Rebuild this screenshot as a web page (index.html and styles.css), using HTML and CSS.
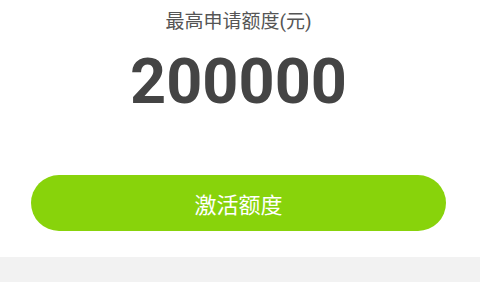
FILE: index.html
```html
<!DOCTYPE html>
<html lang="zh-CN">
<head>
    <meta charset="UTF-8">
    <meta name="viewport" content="width=device-width, initial-scale=1.0">
    <title>最高申请额度</title>
    <link rel="stylesheet" href="styles.css">
</head>
<body>
    <div class="quota">
        <div class="quota-label">最高申请额度(元)</div>
        <div class="quota-amount">200000</div>
        <button class="activate-btn">激活额度</button>
    </div>
    <div class="divider"></div>
</body>
</html>
```

FILE: styles.css
```css
body, html {
    margin: 0;
    background-color: #fff;
    font-family: Roboto, "Noto Sans CJK SC", sans-serif;
}
.quota {
    display: flex;
    flex-direction: column;
    align-items: center;
    padding: 8px 3px 0 0;
}
.quota-label {
    font-size: 19px;
    line-height: 28px;
    color: #555;
}
.quota-amount {
    font-size: 63px;
    font-weight: bold;
    line-height: 72px;
    color: #444;
    margin-top: 10px;
}
.activate-btn {
    width: 415px;
    height: 56px;
    margin-top: 57px;
    border: none;
    border-radius: 28px;
    background-color: #88d30b;
    color: #fff;
    font-family: "Noto Sans CJK SC", sans-serif;
    font-size: 22px;
    cursor: pointer;
}
.divider {
    height: 25px;
    margin-top: 26px;
    background-color: #f2f2f2;
}
```
